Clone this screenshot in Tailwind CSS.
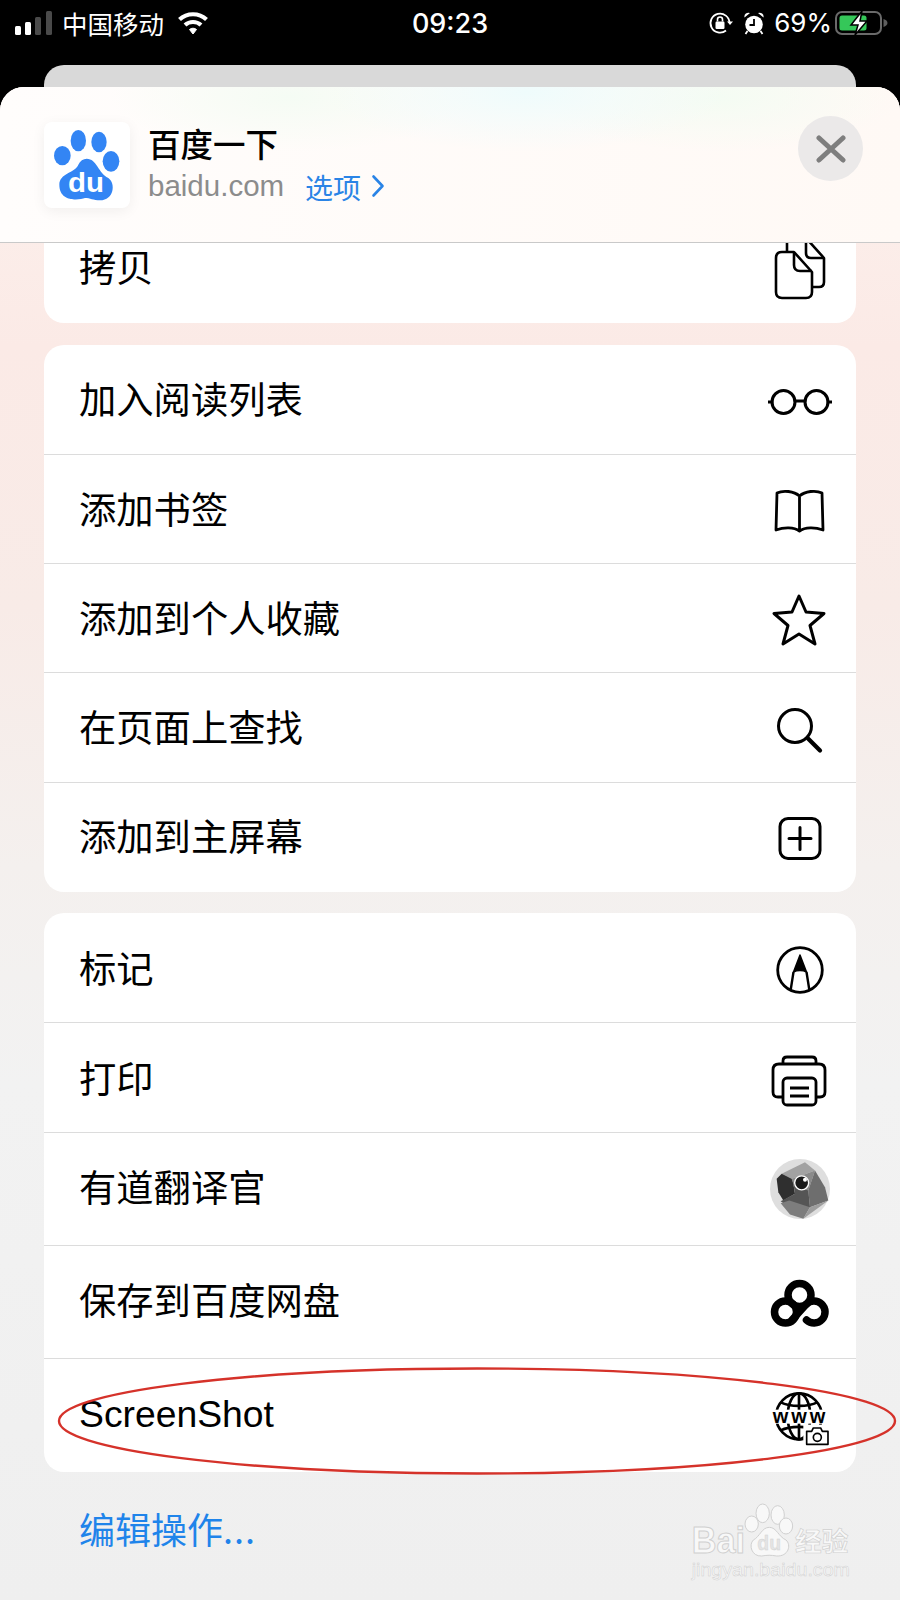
<!DOCTYPE html>
<html lang="zh">
<head>
<meta charset="utf-8">
<title>分享</title>
<script src="https://cdn.jsdelivr.net/npm/@tailwindcss/browser@4"></script>
</head>
<body class="bg-black">
<div class="relative w-[900px] h-[1600px] overflow-hidden bg-black font-['Liberation_Sans','Noto_Sans_CJK_SC',sans-serif] text-black">

  <!-- status bar -->
  <div class="grid grid-cols-3 items-center h-[65px] pb-[19px] text-white">
    <div class="flex items-center pl-[15px]">
      <svg class="w-[37px] h-[24px]" viewBox="0 0 37 24"><rect x="0" y="15" width="6" height="9" rx="1.5" fill="#fff"/><rect x="10" y="11" width="6" height="13" rx="1.5" fill="#fff"/><rect x="20" y="6" width="6" height="18" rx="1.5" fill="#4a4a4a"/><rect x="31" y="0" width="6" height="24" rx="1.5" fill="#4a4a4a"/></svg>
      <span class="ml-[10px] text-[25.5px] leading-none font-['Noto_Sans_CJK_SC',sans-serif] whitespace-nowrap">中国移动</span>
      <svg class="ml-[13px] w-[32px] h-[24px]" viewBox="0 0 32 24" fill="none" stroke="#fff"><path d="M2.500 8.500C10 1.500 22 1.500 29.500 8.500" stroke-width="4.200"/><path d="M8 14C12.500 10 19.500 10 24 14" stroke-width="4.200"/><path d="M12.500 18.500L16 23L19.500 18.500C17.500 16.800 14.500 16.800 12.500 18.500Z" fill="#fff" stroke-width="1"/></svg>
    </div>
    <div class="text-center text-[27px] leading-none font-medium font-['Inter',sans-serif]">09:23</div>
    <div class="flex items-center justify-end pr-[12px]">
      <svg class="w-[26px] h-[24px]" viewBox="0 0 26 24" fill="none"><path d="M21.500 12A9.500 9.500 0 1 0 18 19.500" stroke="#fff" stroke-width="1.800"/><path d="M19 10.500h6l-3 3.600z" fill="#fff"/><rect x="7.500" y="10.500" width="9" height="7.500" rx="1.200" fill="#fff"/><path d="M9.500 10.500V8.500a2.500 2.500 0 0 1 5 0v2" stroke="#fff" stroke-width="1.600"/></svg>
      <svg class="ml-[9px] w-[22px] h-[24px]" viewBox="0 0 22 24"><circle cx="11" cy="13.500" r="8.800" fill="#fff"/><path d="M11 8v6H6.500" stroke="#000" stroke-width="1.800" fill="none"/><path d="M1.500 6.500A4 4 0 0 1 7 2Z M20.500 6.500A4 4 0 0 0 15 2Z" fill="#fff"/><path d="M4.500 20l-2 3M17.500 20l2 3" stroke="#fff" stroke-width="1.800"/></svg>
      <span class="ml-[9px] text-[26px] leading-none font-['Inter',sans-serif] font-normal whitespace-nowrap">69%</span>
      <svg class="ml-[3px] w-[53px] h-[26px]" viewBox="0 0 53 26" fill="none"><rect x="1" y="2" width="45" height="22" rx="6" stroke="#6a6a6a" stroke-width="2"/><rect x="4.500" y="5.500" width="27" height="15" rx="2.500" fill="#35c759"/><path d="M48.500 9c2.500 .8 4 2.200 4 4s-1.500 3.200-4 4z" fill="#5e5e5e"/><path d="M27 1L16 15h7l-3 10L32 11h-7z" fill="#fff" stroke="#000" stroke-width="1.500"/></svg>
    </div>
  </div>

  <!-- card behind the sheet -->
  <div class="mx-[44px] h-[22px] rounded-t-[20px] bg-[#d9d9d9]"></div>

  <!-- sheet -->
  <div class="h-[1513px] rounded-t-[24px] overflow-hidden bg-[linear-gradient(180deg,#fdf1ed_0px,#fbeae6_260px,#f8ebe7_520px,#f4f0ee_780px,#f2f2f2_1000px,#efefef_100%)]">

    <!-- header -->
    <div class="flex h-[156px] pl-[44px] pr-[37px] items-center border-b border-[#c9c9c9] bg-[#fff9f6] bg-[radial-gradient(ellipse_200px_60px_at_527px_5px,#effcfc_0%,#effcfc00_100%),radial-gradient(ellipse_180px_55px_at_290px_10px,#f5fcf4_0%,#f5fcf400_100%),radial-gradient(ellipse_180px_55px_at_720px_10px,#f4fcf3_0%,#f4fcf300_100%),linear-gradient(90deg,#fffdfc_0%,#fff9f5_100%)]">
      <div class="w-[86px] h-[86px] rounded-[8px] bg-white shadow-[0_3px_14px_rgba(0,0,0,0.06)] shrink-0">
        <svg class="w-[86px] h-[86px]" viewBox="12 12 258 258">
          <g fill="#3385f4">
            <ellipse cx="115" cy="68" rx="23" ry="32"/>
            <ellipse cx="177" cy="72" rx="23" ry="31"/>
            <ellipse cx="67" cy="113" rx="25" ry="29"/>
            <ellipse cx="213" cy="130" rx="25" ry="31"/>
            <path d="M140 122C170 122 175 165 205 180C228 196 222 247 180 247C160 247 150 240 135 240C115 247 58 252 58 200C58 165 105 165 115 140C120 128 130 122 140 122Z"/>
          </g>
          <text x="84" y="221" font-family="Liberation Sans" font-weight="700" font-size="82" fill="#fff" textLength="108" lengthAdjust="spacingAndGlyphs">du</text>
        </svg>
      </div>
      <div class="ml-[18px] flex flex-col">
        <div class="mb-[2px] text-[32.5px] leading-[40px] font-medium font-['Noto_Sans_CJK_SC',sans-serif] whitespace-nowrap">百度一下</div>
        <div class="mt-[1px] flex items-center h-[40px]">
          <span class="text-[29.5px] leading-none text-[#8c8c8c]">baidu.com</span>
          <span class="ml-[21px] pt-[1px] text-[28px] leading-none text-[#2a84e6] font-['Noto_Sans_CJK_SC',sans-serif] whitespace-nowrap">选项</span>
          <svg class="ml-[10px] w-[14px] h-[24px]" viewBox="0 0 14 24" fill="none" stroke="#2a84e6" stroke-width="2.600" stroke-linecap="round" stroke-linejoin="round"><path d="M2.500 2.500L11.500 12L2.500 21.500"/></svg>
        </div>
      </div>
      <div class="ml-auto mb-[32px] w-[65px] h-[65px] rounded-full bg-[#ebe9e9] flex items-center justify-center">
        <svg class="w-[30px] h-[30px]" viewBox="0 0 30 30" stroke="#7e7e7e" stroke-width="5" stroke-linecap="round"><path d="M3 4L27 26M27 4L3 26"/></svg>
      </div>
    </div>

    <div class="mx-[44px] flex flex-col text-[37.3px] leading-none">

      <!-- card 1 -->
      <div class="h-[80px] rounded-b-[20px] bg-white overflow-hidden flex items-center justify-between pl-[35px] pr-[24px] pb-[26px]">
        <span>拷贝</span>
        <svg class="w-[64px] h-[64px]" viewBox="0 0 64 64" fill="none" stroke="#000" stroke-width="2.600" stroke-linejoin="round"><path d="M19 14V0H38L56 20V44Q56 49 51 49H45"/><path d="M38 4V15Q38 20 43 20H56"/><path d="M8 20Q8 14 14 14H26L44 34V54Q44 60 38 60H14Q8 60 8 54Z"/><path d="M26 14V27Q26 33 32 33H44"/></svg>
      </div>

      <!-- card 2 -->
      <div class="mt-[22px] rounded-[20px] bg-white divide-y divide-[#dcdcdc]">
        <div class="h-[110px] flex items-center justify-between pl-[35px] pr-[24px]">
          <span class="pt-[5px]">加入阅读列表</span>
          <svg class="w-[64px] h-[64px]" viewBox="0 0 64 64" fill="none" stroke="#000" stroke-width="3" stroke-linecap="round"><circle cx="15.500" cy="34" r="11.500"/><circle cx="48.500" cy="34" r="11.500"/><path d="M27 33H37M0.500 34H4M60 34H63.500"/></svg>
        </div>
        <div class="h-[109px] flex items-center justify-between pl-[35px] pr-[24px]">
          <span class="pt-[5px]">添加书签</span>
          <svg class="w-[64px] h-[64px]" viewBox="0 0 64 64" fill="none" stroke="#000" stroke-width="2.800" stroke-linejoin="round"><path d="M31.500 19C26 14 15 13 9 16L8 53C16 50 26 50 31.500 54C37 50 47 50 55 53L54 16C48 13 37 14 31.500 19ZM31.500 19V54"/></svg>
        </div>
        <div class="h-[109px] flex items-center justify-between pl-[35px] pr-[24px]">
          <span class="pt-[5px]">添加到个人收藏</span>
          <svg class="w-[64px] h-[64px]" viewBox="0 0 64 64" fill="none" stroke="#000" stroke-width="3" stroke-linejoin="round"><path d="M31 10L38 26L56 27.500L42 39.500L47 58L31 48L15 58L20 39.500L6 27.500L24 26Z"/></svg>
        </div>
        <div class="h-[110px] flex items-center justify-between pl-[35px] pr-[24px]">
          <span class="pt-[5px]">在页面上查找</span>
          <svg class="w-[64px] h-[64px]" viewBox="0 0 64 64" fill="none" stroke="#000" stroke-linecap="round"><circle cx="27" cy="30" r="16.500" stroke-width="3"/><path d="M40 42.500L52 54.500" stroke-width="4.200"/></svg>
        </div>
        <div class="h-[109px] flex items-center justify-between pl-[35px] pr-[24px]">
          <span class="pt-[3px]">添加到主屏幕</span>
          <svg class="w-[64px] h-[64px]" viewBox="0 0 64 64" fill="none" stroke="#000" stroke-width="3" stroke-linecap="round"><rect x="12" y="12.500" width="40" height="40" rx="8"/><path d="M32 21.500V43.500M21 32.500H43"/></svg>
        </div>
      </div>

      <!-- card 3 -->
      <div class="mt-[21px] rounded-[20px] bg-white divide-y divide-[#dcdcdc]">
        <div class="h-[110px] flex items-center justify-between pl-[35px] pr-[24px]">
          <span class="pt-[6px]">标记</span>
          <svg class="w-[64px] h-[64px]" viewBox="0 0 64 64" fill="none" stroke="#000" stroke-width="2.800"><circle cx="32" cy="34" r="22.300"/><path d="M32 19L25.500 36C29 34 35 34 38.500 36Z" fill="#000" stroke-width="1.500" stroke-linejoin="round"/><path d="M25.500 36L22.500 55M38.500 36L41.500 55" stroke-width="2.400"/></svg>
        </div>
        <div class="h-[110px] flex items-center justify-between pl-[35px] pr-[24px]">
          <span class="pt-[6px]">打印</span>
          <svg class="w-[64px] h-[64px]" viewBox="0 0 64 64" fill="none" stroke="#000" stroke-width="2.800" stroke-linejoin="round"><path d="M15 18V15Q15 11 19 11H44Q48 11 48 15V18"/><path d="M15 51H10Q5 51 5 46V24Q5 18 11 18H51Q57 18 57 24V46Q57 51 52 51H48"/><rect x="15" y="32" width="33" height="27" rx="4"/><path d="M22 42H41M22 50H41"/></svg>
        </div>
        <div class="h-[113px] flex items-center justify-between pl-[35px] pr-[24px]">
          <span class="pt-[2px]">有道翻译官</span>
          <svg class="w-[64px] h-[64px]" viewBox="0 0 64 64">
            <circle cx="32" cy="32" r="30" fill="#dedede"/>
            <g transform="translate(-8 -6.500) scale(.3333)">
              <path d="M65 70L135 35L165 60L125 75L95 85Z" fill="#a2a2a2"/>
              <path d="M95 85L125 75L165 60L145 120L100 100Z" fill="#8a8a8a"/>
              <path d="M165 60L195 110L205 150L150 170L145 120Z" fill="#6e6e6e"/>
              <path d="M50 85L65 70L95 85L100 100L105 130L70 150L55 125Z" fill="#2f2f2f"/>
              <path d="M100 100L145 120L150 170L90 172L62 152L105 130Z" fill="#555"/>
              <path d="M62 158L88 150L150 170L130 205L90 192Z" fill="#7d7d7d"/>
              <path d="M150 170L205 150L130 205Z" fill="#9d9d9d"/>
              <circle cx="125" cy="97" r="21" fill="#1a1a1a" stroke="#fff" stroke-width="4"/>
              <circle cx="135" cy="88" r="6" fill="#fff"/>
            </g>
          </svg>
        </div>
        <div class="h-[113px] flex items-center justify-between pl-[35px] pr-[24px]">
          <span class="pt-[2px]">保存到百度网盘</span>
          <svg class="w-[64px] h-[64px]" viewBox="0 0 64 64" fill="none" stroke="#000" stroke-width="7.500" stroke-linecap="round"><circle cx="31.500" cy="25" r="11.500"/><circle cx="17.500" cy="42" r="11"/><path d="M24 50L38 34.500A11 11 0 1 1 38.500 50"/></svg>
        </div>
        <div class="h-[113px] flex items-center justify-between pl-[35px] pr-[24px]">
          <span class="pb-[2px]">ScreenShot</span>
          <svg class="w-[64px] h-[64px]" viewBox="0 0 64 64" fill="none">
            <g transform="translate(-8 -1) scale(.3333)">
              <g stroke="#000" stroke-width="8">
                <circle cx="117" cy="100" r="69"/>
                <ellipse cx="117" cy="100" rx="34" ry="69"/>
                <path d="M117 31V169"/>
                <path d="M62 58C90 72 144 72 172 58M62 142C90 128 144 128 172 142"/>
              </g>
              <rect x="30" y="80" width="175" height="42" fill="#fff"/>
              <text x="38" y="120" font-family="Liberation Sans" font-weight="700" font-size="60" fill="#000" textLength="158" lengthAdjust="spacing">www</text>
              <rect x="130" y="125" width="82" height="68" fill="#fff"/>
              <path d="M140 145H155L160 135H182L187 145H204V184H140Z" stroke="#000" stroke-width="5" stroke-linejoin="round"/>
              <circle cx="172" cy="163" r="12" stroke="#000" stroke-width="5"/>
            </g>
          </svg>
        </div>
      </div>

      <!-- edit actions -->
      <div class="mt-[31px] pl-[35px] text-[36px] leading-[50px] text-[#1f84ea] font-['Noto_Sans_CJK_SC',sans-serif]">编辑操作<span class="tracking-[1px]">...</span></div>
    </div>
  </div>

  <!-- red hand-drawn ellipse -->
  <svg class="absolute left-0 top-[1360px] w-[900px] h-[120px] pointer-events-none" viewBox="0 1360 900 120" fill="none"><ellipse cx="477" cy="1421" rx="418" ry="52.500" stroke="#d5322a" stroke-width="2.400"/></svg>

  <!-- watermark -->
  <svg class="absolute left-[680px] top-[1490px] w-[190px] h-[100px] pointer-events-none" viewBox="0 0 570 300" stroke="#d0d0d0" stroke-width="3" fill="#f8f8f8">
    <text x="35" y="190" font-family="Liberation Sans" font-weight="700" font-size="108" textLength="160" lengthAdjust="spacingAndGlyphs">Bai</text>
    <ellipse cx="248" cy="70" rx="20" ry="28"/>
    <ellipse cx="293" cy="75" rx="20" ry="28"/>
    <ellipse cx="215" cy="102" rx="20" ry="24"/>
    <ellipse cx="318" cy="108" rx="20" ry="24"/>
    <path d="M268 112C290 112 295 140 318 150C335 165 325 200 290 198C270 195 265 195 245 198C215 200 205 165 220 150C240 140 245 112 268 112Z"/>
    <text x="232" y="180" font-family="Liberation Sans" font-weight="700" font-size="58" fill="#e4e4e4" stroke-width="1">du</text>
    <text x="345" y="182" font-family="Noto Sans CJK SC" font-weight="700" font-size="80" textLength="160" stroke-width="2">经验</text>
    <text x="35" y="257" font-family="Liberation Sans" font-size="56" textLength="475" lengthAdjust="spacingAndGlyphs" stroke-width="1.500">jingyan.baidu.com</text>
  </svg>
</div>
</body>
</html>
